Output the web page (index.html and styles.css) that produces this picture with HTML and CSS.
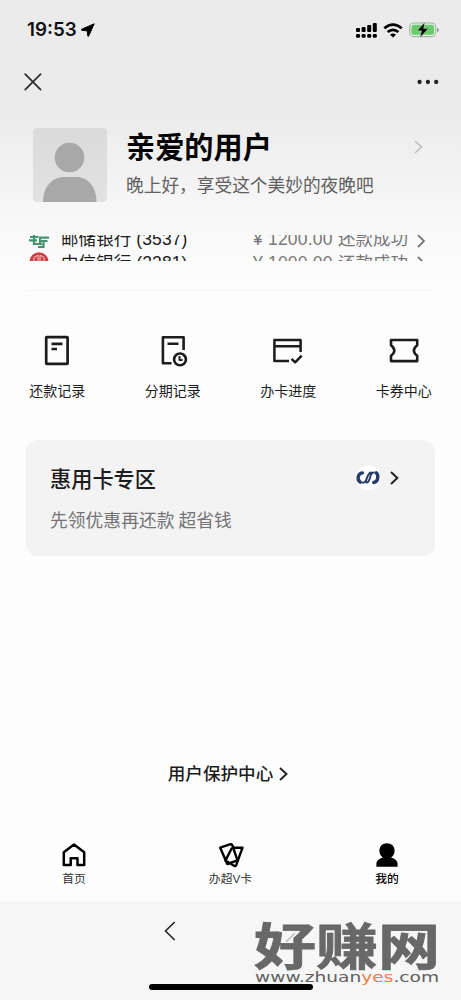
FILE: index.html
```html
<!DOCTYPE html>
<html lang="zh-CN">
<head>
<meta charset="utf-8">
<title>我的</title>
<link rel="stylesheet" href="styles.css">
</head>
<body>
<div class="phone">
  <header class="status">
    <div class="status-left">
      <span class="time">19:53</span>
      <svg width="14" height="14" viewBox="0 0 14 14"><path d="M13.2.8.7 6.2Q.3 7.2.9 7.4L6.2 7.8 6.8 13Q7 13.7 7.6 13.1Z" fill="#000" stroke="#000" stroke-linejoin="round"/></svg>
    </div>
    <div class="status-right">
      <svg width="21" height="15" viewBox="0 0 21 15" fill="#000">
        <rect x="0" y="5" width="4" height="4" rx="1"/><rect x="5.6" y="4" width="4" height="5" rx="1"/><rect x="11.2" y="2" width="4" height="7" rx="1"/><rect x="16.8" y="0" width="4" height="9" rx="1"/>
        <rect x="0" y="11" width="4" height="3.8" rx="1.2"/><rect x="5.6" y="11" width="4" height="3.8" rx="1.2"/><rect x="11.2" y="11" width="4" height="3.8" rx="1.2"/><rect x="16.8" y="11" width="4" height="3.8" rx="1.2"/>
      </svg>
      <svg class="wifi" width="20" height="15" viewBox="0 0 20 15" fill="none" stroke="#000" stroke-width="2.7"><path d="M1.3 5.3Q10-2.2 18.7 5.3M4.6 9Q10 4.6 15.4 9"/><path d="M7 11.7Q10 9.4 13 11.7L10 14.4Z" fill="#000" stroke="none"/></svg>
      <svg class="battery" width="30" height="16" viewBox="0 0 30 16"><rect x=".7" y="1" width="26" height="13.6" rx="4.2" fill="none" stroke="#98b898" stroke-width="1.1"/><rect x="2.4" y="2.8" width="22.6" height="10" rx="2.6" fill="#69cc6c"/><path d="M28.2 6v4q1.5-.7 1.5-2t-1.5-2z" fill="#777"/><path d="M15.8.3 8.2 8.8h4.4L11 15.6 19.4 6.6h-4.8z" fill="#000" stroke="#c8eac8" stroke-width=".4"/></svg>
    </div>
  </header>
  <nav class="nav">
    <svg width="18" height="18" viewBox="0 0 18 18" stroke="#2b2b2b" stroke-width="1.7" stroke-linecap="round"><path d="M1.2 1.2 16.6 16.6M16.6 1.2 1.2 16.6"/></svg>
    <svg width="22" height="6" viewBox="0 0 22 6" fill="#222"><circle cx="2.6" cy="3" r="2.15"/><circle cx="10.9" cy="3" r="2.15"/><circle cx="19.2" cy="3" r="2.15"/></svg>
  </nav>
  <section class="profile">
    <svg class="avatar" width="74" height="74" viewBox="0 0 74 74"><circle cx="36.5" cy="29.5" r="14.8" fill="#a8a8a8"/><path d="M10 74C10 58 20 49 31 49H43C55 49 63.5 59 63.5 74Z" fill="#a8a8a8"/></svg>
    <div class="who"><h1>亲爱的用户</h1><p>晚上好，享受这个美妙的夜晚吧</p></div>
    <svg class="go" width="9" height="14" viewBox="0 0 9 14" fill="none" stroke="#bdbdbd" stroke-width="1.6"><path d="M1 1 7.5 7 1 13"/></svg>
  </section>
  <section class="ticker">
    <div class="record">
      <svg width="20" height="20" viewBox="0 0 20 20" fill="none" stroke="#44936c" stroke-width="2.2"><path d="M1 8H9.5M0 11.4H8M5 6V15H13M9 18H14.5V12H18.5M11 9V15M10 8.6H20M12 12H18"/></svg>
      <span class="bank">邮储银行 (3537)</span><span class="amount">¥ 1200.00</span><span class="done">还款成功</span>
      <svg class="arrow" width="8" height="14" viewBox="0 0 8 14" fill="none" stroke="#777" stroke-width="1.8"><path d="M1 1 7 7 1 13"/></svg>
    </div>
    <div class="record">
      <svg width="20" height="20" viewBox="0 0 20 20"><circle cx="10" cy="9.8" r="9.5" fill="#cf4047"/><path d="M5 9V5.5L9 3.2V10M15 9V5.5L11 3.2V10" fill="none" stroke="#f4c7c7" stroke-width="1"/></svg>
      <span class="bank">中信银行 (2281)</span><span class="amount">¥ 1000.00</span><span class="done">还款成功</span>
      <svg class="arrow" width="8" height="14" viewBox="0 0 8 14" fill="none" stroke="#777" stroke-width="1.8"><path d="M1 1 7 7 1 13"/></svg>
    </div>
  </section>
  <section class="shortcuts">
    <a class="shortcut"><svg width="32" height="32" viewBox="0 0 32 32" fill="none" stroke="#1c1c1c" stroke-width="2.7" stroke-linejoin="round"><rect x="5.2" y="2.2" width="21.4" height="26.6" rx=".6"/><path d="M10.5 8.8H21.5M10.5 14H16" /></svg><span>还款记录</span></a>
    <a class="shortcut"><svg width="32" height="32" viewBox="0 0 32 32" fill="none" stroke="#1c1c1c" stroke-width="2.6" stroke-linejoin="round"><path d="M14.5 28.2H5.9V2.2H26.6V15M10.5 8.8H21.5"/><circle cx="23" cy="24.4" r="5.9"/><path d="M22.5 21V25H25.6" stroke-width="1.9"/></svg><span>分期记录</span></a>
    <a class="shortcut"><svg width="32" height="32" viewBox="0 0 32 32" fill="none" stroke="#1c1c1c" stroke-width="2.5" stroke-linejoin="round"><path d="M17 26.1H2.4V5H28.6V17M2.4 11.2H28.6M19.5 23.8 23.2 27.3 29.7 20.6"/></svg><span>办卡进度</span></a>
    <a class="shortcut"><svg width="32" height="32" viewBox="0 0 32 32" fill="none" stroke="#1c1c1c" stroke-width="2.6" stroke-linejoin="round"><path d="M3 5H29.2V10.3Q22.5 15.6 29.2 20.8V26.1H3V20.8Q9.7 15.6 3 10.3Z"/></svg><span>卡券中心</span></a>
  </section>
  <section class="card">
    <div class="card-head"><h2>惠用卡专区</h2>
      <svg class="brand" width="26" height="26" viewBox="0 0 26 26"><circle cx="13" cy="13" r="12.5" fill="#fff"/><g fill="none" stroke="#263c69" stroke-linecap="round"><path d="M7.5 7.9C2.3 8.5 2 15 5.2 17.2M18.8 17.5C23.4 16.8 23.8 10 21.2 7.8" stroke-width="3.4"/><path d="M7.5 17.6C13.3 18.4 10.5 8.4 16.3 7.6M11.5 17.6C16.4 17 13.5 8 18.8 7.6" stroke-width="2"/></g></svg>
      <svg width="9" height="14" viewBox="0 0 9 14" fill="none" stroke="#222" stroke-width="2"><path d="M1 1 7.3 7 1 13"/></svg>
    </div>
    <p>先领优惠再还款 超省钱</p>
  </section>
  <a class="protect"><span>用户保护中心</span><svg width="9" height="14" viewBox="0 0 9 14" fill="none" stroke="#222" stroke-width="1.9"><path d="M1 1 7.5 7 1 13"/></svg></a>
  <nav class="tabs">
    <a class="tab"><svg width="26" height="26" viewBox="0 0 26 26" fill="none" stroke="#000" stroke-width="2.5" stroke-linejoin="round"><path d="M2.8 10.2 13 2.6 23.2 10.2V23H16.5V16.2H9.7V23H2.8Z"/></svg><span>首页</span></a>
    <a class="tab"><svg width="26" height="26" viewBox="0 0 26 26" fill="none" stroke="#000" stroke-width="2.4" stroke-linejoin="round"><path d="M2.2 5.7 12.5 2.2Q14 2 14.4 3.5L19.5 18.3 9.3 22Z"/><path d="M14 5.7H24.5L18.2 23.2Q17.4 24.8 15.7 23.5L7.4 18.6 14 5.7"/></svg><span>办超V卡</span></a>
    <a class="tab active"><svg width="26" height="26" viewBox="0 0 26 26"><path d="M13 1.3C8.4 1.3 5.4 4.4 5.4 8.7 5.4 11.7 6.7 14 9 15.4 5 16.5 2.4 18.6 2.4 22V24.7H23.6V22C23.6 18.6 21 16.5 17 15.4 19.3 14 20.6 11.7 20.6 8.7 20.6 4.4 17.6 1.3 13 1.3Z"/></svg><span>我的</span></a>
  </nav>
  <footer class="browser">
    <svg class="back" width="12" height="20" viewBox="0 0 12 20" fill="none" stroke="#222" stroke-width="1.6"><path d="M10.7 1 1.5 10 10.7 19"/></svg>
    <div class="home-bar"></div>
    <div class="watermark">
      <svg width="190" height="72" viewBox="0 0 190 72">
        <text class="mark-name" x="2" y="47.5" textLength="186" lengthAdjust="spacingAndGlyphs">好赚网</text>
        <path d="M34 25 43 16" fill="none" stroke="#bbb" stroke-width="1.4"/>
        <text class="mark-url" x="3" y="65" textLength="184" lengthAdjust="spacingAndGlyphs">www.zhuan<tspan class="hot">yes</tspan>.com</text>
      </svg>
    </div>
  </footer>
</div>
</body>
</html>
```
FILE: styles.css
```css
* { box-sizing: border-box; }
body, h1, h2, p { margin: 0; }
body { font-family: "Noto Sans CJK SC", sans-serif; background: #fdfdfd; color: #1c1c1c; }
svg { display: block; flex: none; }
.phone { width: 461px; height: 1000px; overflow: hidden; display: flex; flex-direction: column; background: linear-gradient(#ebebeb 0, #ebebeb 112px, #f8f8f8 220px, #fdfdfd 285px); }
.status { height: 60px; padding: 0 22px 0 27px; display: flex; align-items: center; justify-content: space-between; }
.status-left { display: flex; align-items: center; gap: 4px; }
.time { font: 600 18.8px/24px Inter, sans-serif; color: #111; }
.status-right { display: flex; align-items: center; }
.wifi { margin-left: 6px; }
.battery { margin-left: 6px; }
.nav { height: 44px; padding: 0 22px 0 24px; display: flex; align-items: center; justify-content: space-between; }
.profile { height: 131px; padding: 24px 38px 0 33px; display: flex; align-items: flex-start; }
.avatar { background: linear-gradient(#dadada, #e2e2e2); border-radius: 4px; }
.who { flex: 1; margin: -2px 0 0 19px; white-space: nowrap; }
h1 { font-size: 29.2px; line-height: 38px; font-weight: 700; color: #050505; }
.who p { font-size: 17.7px; line-height: 24px; margin-top: 8px; color: #606060; }
.go { margin-top: 12px; }
.ticker { height: 56px; flex: none; margin: 0 26px; border-bottom: 1px solid #f5f5f5; display: grid; grid-template-rows: 17px 9px; }
.record { height: 22px; margin-top: -7px; display: grid; grid-template-columns: 35px 192px 85px 79px 9px; align-items: center; font: 17.5px/22px "Liberation Sans", "Noto Sans CJK SC", sans-serif; white-space: nowrap; clip-path: inset(7px 0 0 0); }
.record + .record { height: 20px; margin-top: 0; align-items: start; clip-path: inset(0 0 11px 0); }
.record svg { margin-left: 3px; }
.record .arrow { margin: 4px 0 0; }
.bank { letter-spacing: .1px; }
.amount, .done { color: #777; }
.amount { letter-spacing: .2px; }
.shortcuts { height: 149px; flex: none; display: grid; grid-template-columns: repeat(4, 115.5px); padding-top: 44px; margin-left: -.5px; }
.shortcut { display: flex; flex-direction: column; align-items: center; font-size: 14px; line-height: 20px; gap: 13px; }
.card { height: 116px; flex: none; margin: 0 26px; padding: 22px 36px 0 24px; border-radius: 12px; background: #f3f3f3; }
.card-head { height: 31px; display: flex; align-items: center; }
h2 { flex: 1; font-size: 21.2px; line-height: 30px; font-weight: 500; }
.brand { margin-right: 9px; }
.card p { font-size: 17.8px; line-height: 26px; margin-top: 13px; color: #747474; }
.protect { height: 281px; padding: 204px 5px 0 0; display: flex; align-items: flex-start; justify-content: center; font-size: 17.6px; line-height: 26px; font-weight: 500; gap: 6px; }
.protect svg { margin-top: 7px; }
.tabs { height: 64px; flex: none; display: grid; grid-template-columns: 148px 165px 148px; padding-top: 5px; background: #fdfdfd; }
.tab { display: flex; flex-direction: column; align-items: center; font: 11.8px/18px "Liberation Sans", "Noto Sans CJK SC", sans-serif; color: #333; }
.tab.active { color: #000; font-family: "Noto Sans CJK SC", sans-serif; font-weight: 500; }
.tab span { margin-top: 2px; }
.tab.active span { margin-top: 1px; }
.browser { height: 99px; flex: none; background: #f6f6f6; position: relative; padding: 20px 0 0 164px; }
.home-bar { width: 164px; height: 6px; border-radius: 3px; background: #000; margin: 43px 0 0 -15px; }
.watermark { position: absolute; left: 252px; top: 16px; }
.watermark svg { overflow: visible; }
.mark-name { font: 700 50px "Noto Sans CJK SC", sans-serif; fill: #686868; stroke: #686868; stroke-width: .8px; }
.mark-url { font: 14px "DejaVu Sans", sans-serif; fill: #606060; }
.hot { fill: #f17c45; }
```
